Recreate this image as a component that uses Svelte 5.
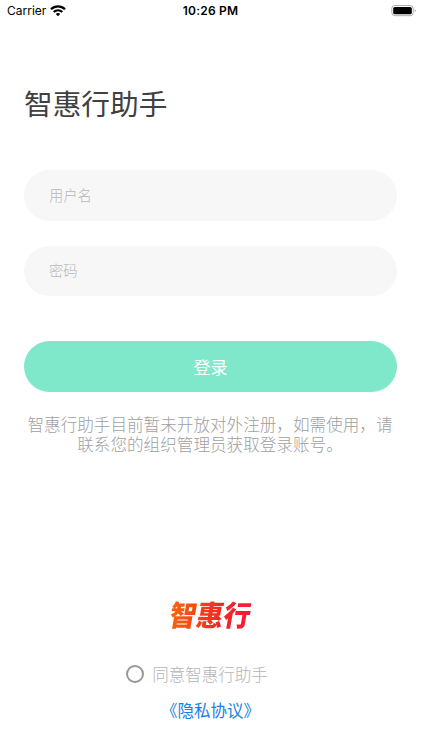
<script>
    let username = '';
    let password = '';
    let agreed = false;

    function handleLogin() {
        if (!agreed) {
            alert('请先同意《隐私协议》');
        }
    }
</script>

<div class="page">
    <div class="status-bar">
        <div class="carrier">
            <span>Carrier</span>
            <svg width="16" height="12" viewBox="0 0 16 12" fill="none" stroke="#000" stroke-width="2.3">
                <path d="M1 4.2C5 .3 11 .3 15 4.2" />
                <path d="M3.7 7C6.2 4.7 9.8 4.7 12.3 7" />
                <path d="M5.8 8.9C7 7.7 9 7.7 10.2 8.9L8 11.2Z" fill="#000" stroke="none" />
            </svg>
        </div>
        <span class="time">10:26 PM</span>
        <svg class="battery" width="26" height="12" viewBox="0 0 26 12">
            <rect x="0.8" y="0.5" width="21.4" height="10.2" rx="3" fill="#fff" stroke="#aaa" />
            <rect x="2.2" y="1.9" width="18.6" height="7.4" rx="1.6" fill="#000" />
            <path d="M23.6 3.9v3.4c1.5-.5 1.5-2.9 0-3.4z" fill="#aaa" />
        </svg>
    </div>

    <h1>智惠行助手</h1>

    <form on:submit|preventDefault={handleLogin}>
        <input type="text" bind:value={username} placeholder="用户名" />
        <input type="password" bind:value={password} placeholder="密码" />
        <button type="submit">登录</button>
    </form>

    <p class="hint">智惠行助手目前暂未开放对外注册，如需使用，请<br />联系您的组织管理员获取登录账号。</p>

    <div class="footer">
        <div class="logo">智惠行</div>
        <label class="agree">
            <input type="checkbox" bind:checked={agreed} />
            <span>同意智惠行助手</span>
        </label>
        <a href="#privacy">《隐私协议》</a>
    </div>
</div>

<style>
    :global(body) {
        background: #fff;
    }

    .page {
        box-sizing: border-box;
        display: flex;
        flex-direction: column;
        height: 750px;
        padding: 0 25px 0 24px;
        overflow: hidden;
        font-family: Inter, "Noto Sans CJK SC", sans-serif;
    }

    .status-bar {
        display: grid;
        grid-template-columns: 1fr auto 1fr;
        align-items: center;
        height: 22px;
        margin: 0 -20px 0 -17px;
        color: #000;
        font-size: 12px;
    }

    .carrier {
        display: flex;
        align-items: center;
        gap: 4px;
    }

    .carrier span,
    .time {
        line-height: 20px;
        padding-bottom: 1px;
    }

    .time {
        margin-right: 3px;
        font-weight: 600;
        letter-spacing: 0.2px;
    }

    .battery {
        justify-self: end;
    }

    h1 {
        margin: 61px 0 0;
        color: #404040;
        font-family: "Noto Sans CJK SC", sans-serif;
        font-size: 28.7px;
        font-weight: 400;
        line-height: 40px;
    }

    form {
        display: flex;
        flex-direction: column;
        margin-top: 47px;
    }

    input[type="text"],
    input[type="password"] {
        box-sizing: border-box;
        height: 51px;
        margin: 0 0 25px;
        padding: 0 25px 3px;
        border: none;
        border-radius: 26px;
        background: #f7f7f7;
        font-family: "Noto Sans CJK SC", sans-serif;
        font-size: 14.3px;
        font-weight: 300;
        outline: none;
    }

    input[type="password"] {
        height: 50px;
    }

    input::placeholder {
        color: #b8b8ba;
    }

    button {
        height: 51px;
        margin-top: 20px;
        border: none;
        border-radius: 26px;
        background: #80e8ca;
        color: #fff;
        font-family: "Noto Sans CJK SC", sans-serif;
        font-size: 17px;
        cursor: pointer;
    }

    .hint {
        margin: 22px 0 0 -1px;
        color: #a0a0a0;
        font-family: "Noto Sans CJK SC", sans-serif;
        font-size: 16.6px;
        font-weight: 300;
        line-height: 20px;
        text-align: center;
        white-space: nowrap;
    }

    .footer {
        display: flex;
        flex-direction: column;
        align-items: center;
        margin-top: 144px;
        font-family: "Noto Sans CJK SC", sans-serif;
        font-size: 16.5px;
    }

    .logo {
        transform: skewX(-10deg) scaleY(1.06);
        background: linear-gradient(90deg, #f8650c, #f32a22 60%, #f51a38);
        -webkit-background-clip: text;
        background-clip: text;
        color: transparent;
        font-size: 27px;
        font-weight: 900;
        line-height: 32px;
    }

    .agree {
        display: flex;
        align-items: center;
        gap: 8px;
        height: 24px;
        margin: 32px 27px 0 0;
        color: #b4b4b4;
        font-weight: 300;
    }

    .agree input {
        appearance: none;
        box-sizing: border-box;
        width: 18px;
        height: 18px;
        margin: 0;
        border: 2px solid #989898;
        border-radius: 50%;
    }

    .agree input:checked {
        background: #80e8ca;
    }

    a {
        margin-top: 12px;
        color: #1682e6;
        line-height: 24px;
        text-decoration: none;
    }
</style>
